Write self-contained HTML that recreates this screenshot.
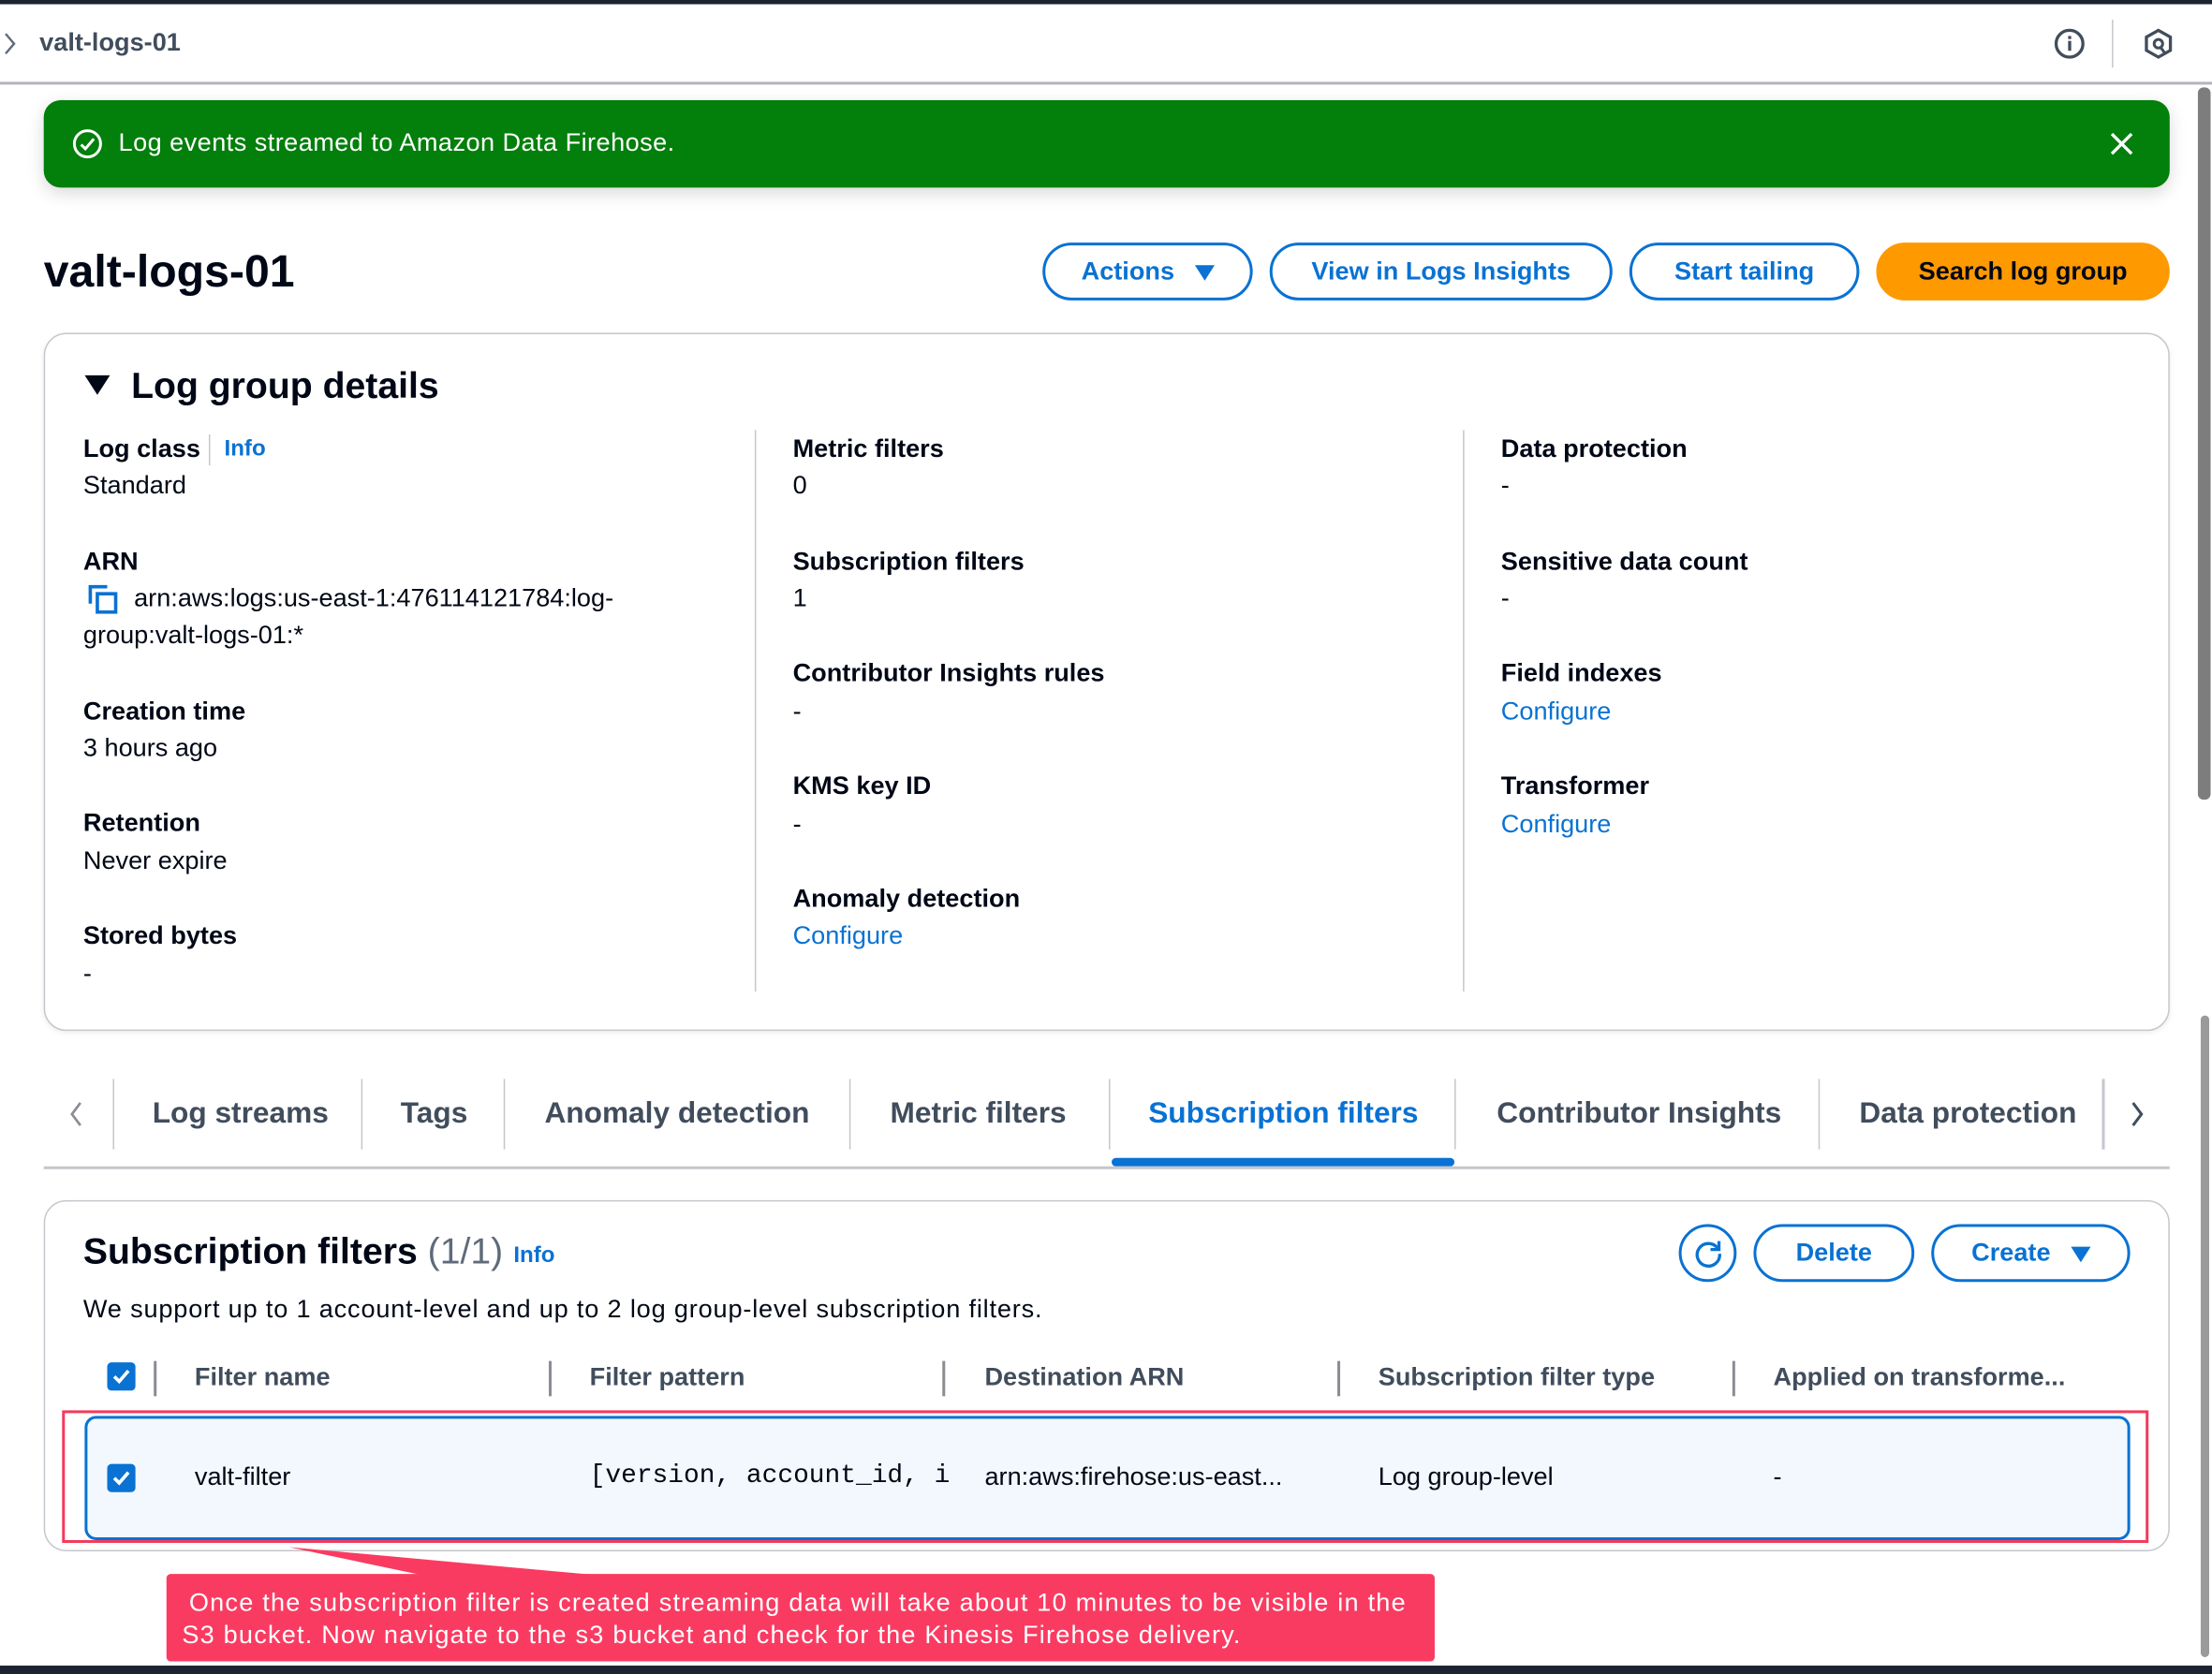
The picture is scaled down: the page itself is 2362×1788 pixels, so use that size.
<!DOCTYPE html>
<html><head><meta charset="utf-8">
<style>
*{box-sizing:border-box;margin:0;padding:0}
html,body{width:2362px;height:1788px;overflow:hidden;background:#fff}
#w{position:absolute;left:0;top:0;width:1568px;height:1187px;transform:scale(1.50638);transform-origin:0 0;font-family:"Liberation Sans",sans-serif;color:#000716}
.a{position:absolute;white-space:nowrap}
.lbl{font-weight:bold;font-size:18px;color:#000716}
.val{font-size:18px;color:#000716}
.lnk{font-size:18px;color:#0972d3}
.btn{position:absolute;height:41px;border:2px solid #0972d3;border-radius:21px;color:#0972d3;font-weight:bold;font-size:18px;display:flex;align-items:center;justify-content:center;background:#fff}
.tab{position:absolute;top:778px;font-size:21px;font-weight:bold;color:#414d5c}
.tdiv{position:absolute;top:765px;width:1px;height:50px;background:#c6c6cd}
.th{position:absolute;top:966px;font-size:18px;font-weight:bold;color:#414d5c}
.hs{position:absolute;top:965px;width:2px;height:25px;background:#8c8c94}
.cb{position:absolute;width:20px;height:20px;background:#0972d3;border-radius:3px}
</style></head><body><div id="w">
<div class="a" style="left:0;top:0;width:1568px;height:3px;background:#1b2330"></div>
<svg class="a" style="left:1px;top:22px" width="12" height="18"><path d="M3 2l6 7-6 7" stroke="#5f6b7a" stroke-width="1.6" fill="none"/></svg>
<div class="a" style="left:28px;top:20px;font-size:18px;font-weight:bold;color:#414d5c">valt-logs-01</div>
<svg class="a" style="left:1455px;top:19px" width="24" height="24"><circle cx="12" cy="12" r="9.5" stroke="#414d5c" stroke-width="2.2" fill="none"/><rect x="11" y="10" width="2.2" height="7" fill="#414d5c"/><rect x="11" y="6.5" width="2.2" height="2.2" fill="#414d5c"/></svg>
<div class="a" style="left:1497px;top:14px;width:1px;height:34px;background:#c6c6cd"></div>
<svg class="a" style="left:1518px;top:19px" width="24" height="24"><path d="M12 2.5l8.5 4.8v9.4L12 21.5 3.5 16.7V7.3z" stroke="#414d5c" stroke-width="2.2" fill="none"/><circle cx="12" cy="12" r="3" stroke="#414d5c" stroke-width="2" fill="none"/><path d="M13.5 14.5l3 4" stroke="#414d5c" stroke-width="2"/></svg>
<div class="a" style="left:0;top:58px;width:1568px;height:2px;background:#b4b4bb"></div>
<div class="a" style="left:1558px;top:62px;width:9px;height:505px;background:#7d7d7d;border-radius:4px"></div>
<div class="a" style="left:1560px;top:720px;width:6px;height:455px;background:#9a9a9a;border-radius:3px"></div>

<div class="a" style="left:31px;top:71px;width:1507px;height:62px;background:#037f0c;border-radius:12px;box-shadow:0 4px 12px rgba(0,0,0,.15)"></div>
<svg class="a" style="left:51px;top:91px" width="22" height="22"><circle cx="11" cy="11" r="9.3" stroke="#fff" stroke-width="2" fill="none"/><path d="M6.5 11.5l3 3 6-7" stroke="#fff" stroke-width="2" fill="none"/></svg>
<div class="a" style="left:84px;top:91px;font-size:18px;color:#fff;letter-spacing:0.3px">Log events streamed to Amazon Data Firehose.</div>
<svg class="a" style="left:1494px;top:92px" width="20" height="20"><path d="M3 3l14 14M17 3L3 17" stroke="#fff" stroke-width="2.2"/></svg>

<div class="a" style="left:31px;top:174px;font-size:32px;font-weight:bold">valt-logs-01</div>
<div class="btn" style="left:739px;top:172px;width:149px">Actions<svg style="margin-left:14px" width="14" height="12"><path d="M0 1h14L7 12z" fill="#0972d3"/></svg></div>
<div class="btn" style="left:900px;top:172px;width:243px">View in Logs Insights</div>
<div class="btn" style="left:1155px;top:172px;width:163px">Start tailing</div>
<div class="btn" style="left:1330px;top:172px;width:208px;background:#ff9900;border-color:#ff9900;color:#000716">Search log group</div>

<div class="a" style="left:31px;top:236px;width:1507px;height:495px;border:1px solid #c6c6cd;border-radius:16px;box-shadow:0 1px 4px rgba(0,7,22,.08)"></div>
<svg class="a" style="left:60px;top:266px" width="18" height="14"><path d="M0 0h18L9 14z" fill="#000716"/></svg>
<div class="a" style="left:93px;top:258px;font-size:26px;font-weight:bold">Log group details</div>
<div class="a" style="left:535px;top:305px;width:1px;height:398px;background:#c6c6cd"></div>
<div class="a" style="left:1037px;top:305px;width:1px;height:398px;background:#c6c6cd"></div>

<div class="a lbl" style="left:59px;top:308px">Log class</div>
<div class="a" style="left:148px;top:308px;width:1px;height:22px;background:#c6c6cd"></div>
<div class="a" style="left:159px;top:310px;font-size:16px;font-weight:bold;color:#0972d3">Info</div>
<div class="a val" style="left:59px;top:334px">Standard</div>
<div class="a lbl" style="left:59px;top:388px">ARN</div>
<svg class="a" style="left:62px;top:414px" width="24" height="22"><path d="M2 14V2h12" stroke="#0972d3" stroke-width="2.4" fill="none"/><rect x="7" y="7" width="13" height="13" stroke="#0972d3" stroke-width="2.4" fill="none"/></svg>
<div class="a val" style="left:95px;top:414px">arn:aws:logs:us-east-1:476114121784:log-</div>
<div class="a val" style="left:59px;top:440px">group:valt-logs-01:*</div>
<div class="a lbl" style="left:59px;top:494px">Creation time</div>
<div class="a val" style="left:59px;top:520px">3 hours ago</div>
<div class="a lbl" style="left:59px;top:573px">Retention</div>
<div class="a val" style="left:59px;top:600px">Never expire</div>
<div class="a lbl" style="left:59px;top:653px">Stored bytes</div>
<div class="a val" style="left:59px;top:680px">-</div>

<div class="a lbl" style="left:562px;top:308px">Metric filters</div>
<div class="a val" style="left:562px;top:334px">0</div>
<div class="a lbl" style="left:562px;top:388px">Subscription filters</div>
<div class="a val" style="left:562px;top:414px">1</div>
<div class="a lbl" style="left:562px;top:467px">Contributor Insights rules</div>
<div class="a val" style="left:562px;top:494px">-</div>
<div class="a lbl" style="left:562px;top:547px">KMS key ID</div>
<div class="a val" style="left:562px;top:574px">-</div>
<div class="a lbl" style="left:562px;top:627px">Anomaly detection</div>
<div class="a lnk" style="left:562px;top:653px">Configure</div>

<div class="a lbl" style="left:1064px;top:308px">Data protection</div>
<div class="a val" style="left:1064px;top:334px">-</div>
<div class="a lbl" style="left:1064px;top:388px">Sensitive data count</div>
<div class="a val" style="left:1064px;top:414px">-</div>
<div class="a lbl" style="left:1064px;top:467px">Field indexes</div>
<div class="a lnk" style="left:1064px;top:494px">Configure</div>
<div class="a lbl" style="left:1064px;top:547px">Transformer</div>
<div class="a lnk" style="left:1064px;top:574px">Configure</div>

<svg class="a" style="left:47px;top:780px" width="14" height="20"><path d="M10 2L4 10l6 8" stroke="#8c8c94" stroke-width="1.8" fill="none"/></svg>
<div class="tdiv" style="left:80px"></div>
<div class="tab" style="left:108px">Log streams</div>
<div class="tdiv" style="left:256px"></div>
<div class="tab" style="left:284px">Tags</div>
<div class="tdiv" style="left:357px"></div>
<div class="tab" style="left:386px">Anomaly detection</div>
<div class="tdiv" style="left:602px"></div>
<div class="tab" style="left:631px">Metric filters</div>
<div class="tdiv" style="left:786px"></div>
<div class="tab" style="left:814px;color:#0972d3">Subscription filters</div>
<div class="tdiv" style="left:1031px"></div>
<div class="tab" style="left:1061px">Contributor Insights</div>
<div class="tdiv" style="left:1289px"></div>
<div class="tab" style="left:1318px">Data protection</div>
<div class="tdiv" style="left:1490px;width:2px"></div>
<svg class="a" style="left:1508px;top:780px" width="14" height="20"><path d="M4 2l6 8-6 8" stroke="#414d5c" stroke-width="2" fill="none"/></svg>
<div class="a" style="left:788px;top:821px;width:243px;height:6px;background:#0972d3;border-radius:3px"></div>
<div class="a" style="left:31px;top:827px;width:1507px;height:2px;background:#c6c6cd"></div>

<div class="a" style="left:31px;top:851px;width:1507px;height:249px;border:1px solid #c6c6cd;border-radius:16px"></div>
<div class="a" style="left:59px;top:872px;font-size:26px;font-weight:bold">Subscription filters <span style="font-weight:normal;color:#5f6b7a">(1/1)</span></div>
<div class="a" style="left:364px;top:882px;font-size:16px;font-weight:bold;color:#0972d3">Info</div>
<div class="btn" style="left:1190px;top:868px;width:41px;padding:0"><svg width="24" height="24"><path d="M18.5 8A8 8 0 1 0 20 12" stroke="#0972d3" stroke-width="2.2" fill="none"/><path d="M19.5 3v6h-6" stroke="#0972d3" stroke-width="2.2" fill="none"/></svg></div>
<div class="btn" style="left:1243px;top:868px;width:114px">Delete</div>
<div class="btn" style="left:1369px;top:868px;width:141px">Create<svg style="margin-left:14px" width="14" height="12"><path d="M0 1h14L7 12z" fill="#0972d3"/></svg></div>
<div class="a" style="left:59px;top:918px;font-size:18px;color:#000716;letter-spacing:0.55px">We support up to 1 account-level and up to 2 log group-level subscription filters.</div>

<div class="cb" style="left:76px;top:966px"><svg width="20" height="20"><path d="M5 10l3.5 3.5L15 6" stroke="#fff" stroke-width="2.4" fill="none"/></svg></div>
<div class="hs" style="left:109px"></div>
<div class="th" style="left:138px">Filter name</div>
<div class="hs" style="left:389px"></div>
<div class="th" style="left:418px">Filter pattern</div>
<div class="hs" style="left:668px"></div>
<div class="th" style="left:698px">Destination ARN</div>
<div class="hs" style="left:948px"></div>
<div class="th" style="left:977px">Subscription filter type</div>
<div class="hs" style="left:1228px"></div>
<div class="th" style="left:1257px">Applied on transforme...</div>

<div class="a" style="left:60px;top:1004px;width:1450px;height:88px;background:#f2f8fd;border:2px solid #0972d3;border-radius:8px"></div>
<div class="a" style="left:44px;top:1000px;width:1479px;height:94px;border:2px solid #f43a5d"></div>
<div class="cb" style="left:76px;top:1038px"><svg width="20" height="20"><path d="M5 10l3.5 3.5L15 6" stroke="#fff" stroke-width="2.4" fill="none"/></svg></div>
<div class="a val" style="left:138px;top:1037px">valt-filter</div>
<div class="a" style="left:418px;top:1036px;font-size:18.5px;font-family:'Liberation Mono',monospace">[version, account_id, i</div>
<div class="a val" style="left:698px;top:1037px">arn:aws:firehose:us-east...</div>
<div class="a val" style="left:977px;top:1037px">Log group-level</div>
<div class="a val" style="left:1257px;top:1037px">-</div>

<svg class="a" style="left:200px;top:1095px" width="230" height="25"><path d="M5 2L100 22H225z" fill="#fa3b61"/></svg>
<div class="a" style="left:118px;top:1116px;width:899px;height:62px;background:#fa3b61;border-radius:3px"></div>
<div class="a" style="left:134px;top:1126px;font-size:18px;color:#fff;letter-spacing:0.8px">Once the subscription filter is created streaming data will take about 10 minutes to be visible in the</div>
<div class="a" style="left:129px;top:1149px;font-size:18px;color:#fff;letter-spacing:0.8px">S3 bucket. Now navigate to the s3 bucket and check for the Kinesis Firehose delivery.</div>
<div class="a" style="left:0;top:1181px;width:1568px;height:6px;background:#1b2330"></div>
</div></body></html>
